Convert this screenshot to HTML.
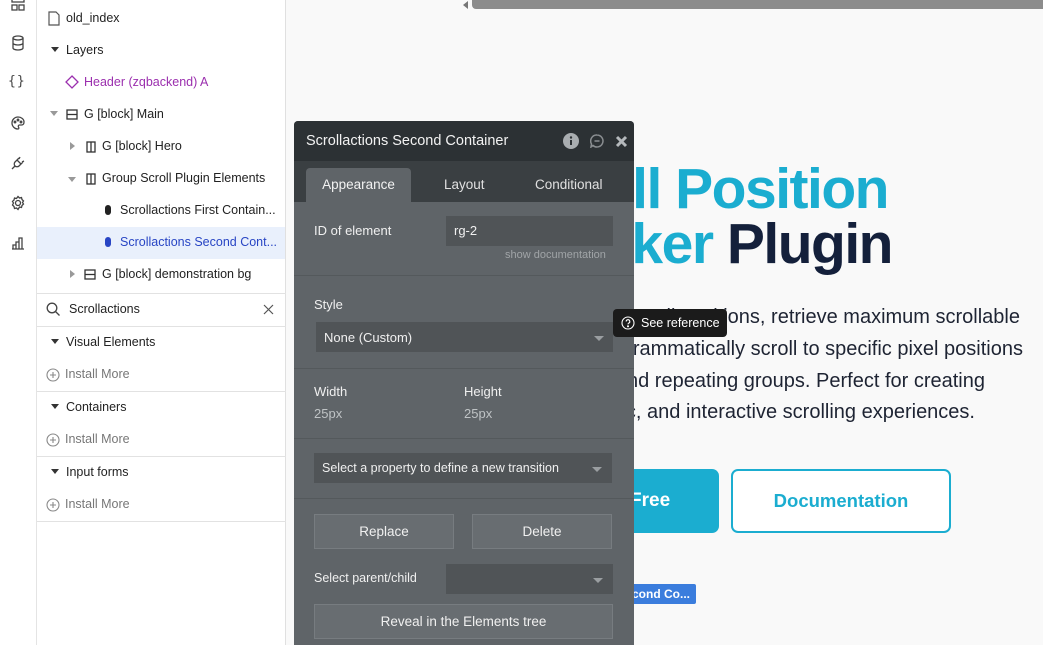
<!DOCTYPE html>
<html><head><style>
*{box-sizing:border-box;margin:0;padding:0}
body{width:1043px;height:645px;overflow:hidden;background:#f9f9f9;font-family:"Liberation Sans",sans-serif;position:relative}
.abs{position:absolute}
.sb{left:0;top:0;width:37px;height:645px;background:#fff;border-right:1px solid #e4e4e4}
.pn{left:37px;top:0;width:249px;height:645px;background:#fff;border-right:1px solid #e0e0e0}
.row{position:absolute;font-size:12.5px;color:#222;white-space:nowrap}
.tri{display:inline-block;width:0;height:0;border-left:4px solid transparent;border-right:4px solid transparent;border-top:5px solid #333}
.trir{display:inline-block;width:0;height:0;border-top:4px solid transparent;border-bottom:4px solid transparent;border-left:5px solid #999}
.hr{position:absolute;left:37px;width:249px;height:1px;background:#e2e2e2}
.ic{position:absolute;left:9px;width:18px;height:18px}
.panel{left:294px;top:121px;width:340px;height:524px;background:#5f6468;border-radius:4px 4px 0 0;overflow:hidden}
.lbl{position:absolute;color:#f0f0f0;font-size:13px}
.inp{position:absolute;background:#505457}
.btn{position:absolute;background:#686d71;border:1px solid #777c80;color:#f0f0f0;font-size:13.5px;text-align:center}
.dd{position:absolute;width:0;height:0;border-left:5px solid transparent;border-right:5px solid transparent;border-top:5px solid #9a9ea1}
.sep{position:absolute;left:0;width:340px;height:1px;background:#54595c}
.para{position:absolute;font-size:20px;color:#1e2433;white-space:nowrap;font-family:"Liberation Sans",sans-serif}
.h{position:absolute;font-size:57px;font-weight:bold;color:#1badd0;white-space:nowrap;letter-spacing:-1.5px}
</style></head><body>
<div class="abs" style="left:472px;top:0;width:571px;height:9px;background:#8c8c8c;border-radius:0 0 0 4px"></div>
<div class="abs" style="left:463px;top:1px;width:0;height:0;border-top:4px solid transparent;border-bottom:4px solid transparent;border-right:5px solid #777"></div>

<div class="h" style="right:155px;top:156px">Scroll Position</div>
<div class="h" style="right:151px;top:211px">Tracker <span style="color:#14203b">Plugin</span></div>
<div class="para" style="right:23px;top:306px">scroll positions, retrieve maximum scrollable</div>
<div class="para" style="right:20px;top:338px">and programmatically scroll to specific pixel positions</div>
<div class="para" style="right:58px;top:370px">pages and repeating groups. Perfect for creating</div>
<div class="para" style="right:68px;top:401px">dynamic, and interactive scrolling experiences.</div>
<div class="abs" style="left:600px;top:469px;width:119px;height:64px;background:#1badd0;border-radius:7px;color:#fff;font-weight:bold;font-size:19px;line-height:64px;padding-left:30px">Free</div>
<div class="abs" style="left:731px;top:469px;width:220px;height:64px;background:#fff;border:2px solid #1badd0;border-radius:7px;color:#1badd0;font-weight:bold;font-size:18.5px;line-height:60px;text-align:center">Documentation</div>
<div class="abs" style="left:620px;top:584px;width:76px;height:20px;background:#3b7ddd;border-radius:2px;color:#fff;font-size:12px;line-height:20px;padding-left:12px;font-weight:bold">cond Co...</div>

<div class="abs sb"></div>
<svg class="ic" style="top:-4px" viewBox="0 0 18 18" fill="none" stroke="#444" stroke-width="1.3"><rect x="3" y="2" width="12" height="4"/><rect x="3" y="9" width="5" height="5"/><rect x="10" y="9" width="5" height="5"/></svg>
<svg class="ic" style="top:34px" viewBox="0 0 18 18" fill="none" stroke="#444" stroke-width="1.3"><ellipse cx="9" cy="4" rx="5" ry="2"/><path d="M4 4v10c0 1 2 2 5 2s5-1 5-2V4M4 9c0 1 2 2 5 2s5-1 5-2"/></svg>
<div class="abs" style="left:8px;top:74px;font-size:13px;color:#444;font-family:'DejaVu Sans Mono',monospace;letter-spacing:1px">{}</div>
<svg class="ic" style="top:114px" viewBox="0 0 18 18" fill="none" stroke="#444" stroke-width="1.3"><path d="M9 3a6 6 0 1 0 0 12c1 0 1-1 .5-2s0-2 1-2h2c1.5 0 2.5-1 2.5-3 0-3-3-5-6-5z"/><circle cx="6" cy="8" r=".8"/><circle cx="9" cy="6" r=".8"/><circle cx="12" cy="8" r=".8"/></svg>
<svg class="ic" style="top:154px" viewBox="0 0 18 18" fill="none" stroke="#444" stroke-width="1.3"><path d="M3 15l3-3M8 6l4 4-2 2c-1 1-3 1-4 0s-1-3 0-4zM10 4l-2 2M14 8l-2 2M11 3l-1 2M15 7l-2 1"/></svg>
<svg class="ic" style="top:194px" viewBox="0 0 18 18" fill="none" stroke="#444" stroke-width="1.3"><circle cx="9" cy="9" r="2.5"/><path d="M9 2.5l1.5 1.5 2-.5.5 2 1.5 1.5-1 1.5 1 1.5-1.5 1.5-.5 2-2-.5L9 15.5 7.5 14l-2 .5-.5-2L3.5 11l1-2-1-1.5L5 6l.5-2 2 .5z"/></svg>
<svg class="ic" style="top:234px" viewBox="0 0 18 18" fill="none" stroke="#444" stroke-width="1.3"><path d="M3 15h12M4 15v-4h3v4M7 15V8h3v7M10 15V4h3v11"/></svg>

<div class="abs pn"></div>
<svg class="abs" style="left:48px;top:11px" width="12" height="15" viewBox="0 0 12 15" fill="none" stroke="#555" stroke-width="1.2"><path d="M1 1h7l3 3v10H1z"/></svg>
<div class="row" style="left:66px;top:11px">old_index</div>
<div class="row" style="left:51px;top:43px"><span class="tri" style="margin-right:7px;vertical-align:2px"></span>Layers</div>
<svg class="abs" style="left:65px;top:75px" width="14" height="14" viewBox="0 0 14 14" fill="none" stroke="#9b2fae" stroke-width="1.3"><path d="M7 1l6 6-6 6-6-6z"/></svg>
<div class="row" style="left:84px;top:75px;color:#9b2fae">Header (zqbackend) A</div>
<div class="row" style="left:50px;top:107px"><span class="tri" style="border-top-color:#999;margin-right:7px;vertical-align:2px"></span></div>
<svg class="abs" style="left:66px;top:109px" width="12" height="11" viewBox="0 0 12 11" fill="none" stroke="#333" stroke-width="1.3"><rect x="1" y="1" width="10" height="9"/><path d="M1 5.5h10"/></svg>
<div class="row" style="left:84px;top:107px">G [block] Main</div>
<div class="row" style="left:70px;top:139px"><span class="trir"></span></div>
<svg class="abs" style="left:86px;top:141px" width="10" height="12" viewBox="0 0 10 12" fill="none" stroke="#333" stroke-width="1.3"><rect x="1" y="1" width="8" height="10"/><path d="M5 1v10"/></svg>
<div class="row" style="left:102px;top:139px">G [block] Hero</div>
<div class="row" style="left:68px;top:171px"><span class="tri" style="border-top-color:#999"></span></div>
<svg class="abs" style="left:86px;top:173px" width="10" height="12" viewBox="0 0 10 12" fill="none" stroke="#333" stroke-width="1.3"><rect x="1" y="1" width="8" height="10"/><path d="M5 1v10"/></svg>
<div class="row" style="left:102px;top:171px">Group Scroll Plugin Elements</div>
<div class="abs" style="left:105px;top:205px;width:6px;height:10px;border-radius:3px;background:#222"></div>
<div class="row" style="left:120px;top:203px">Scrollactions First Contain...</div>
<div class="abs" style="left:37px;top:227px;width:248px;height:32px;background:#e9f0fc"></div>
<div class="abs" style="left:105px;top:237px;width:6px;height:10px;border-radius:3px;background:#2845c4"></div>
<div class="row" style="left:120px;top:235px;color:#2845c4">Scrollactions Second Cont...</div>
<div class="row" style="left:70px;top:267px"><span class="trir"></span></div>
<svg class="abs" style="left:84px;top:269px" width="12" height="11" viewBox="0 0 12 11" fill="none" stroke="#333" stroke-width="1.3"><rect x="1" y="1" width="10" height="9"/><path d="M1 5.5h10"/></svg>
<div class="row" style="left:102px;top:267px">G [block] demonstration bg</div>
<div class="hr" style="top:293px"></div>
<svg class="abs" style="left:46px;top:302px" width="15" height="15" viewBox="0 0 15 15" fill="none" stroke="#444" stroke-width="1.3"><circle cx="6" cy="6" r="4.8"/><path d="M9.5 9.5l4 4"/></svg>
<div class="row" style="left:69px;top:302px">Scrollactions</div>
<svg class="abs" style="left:263px;top:304px" width="11" height="11" viewBox="0 0 11 11" stroke="#555" stroke-width="1.2"><path d="M1 1l9 9M10 1l-9 9"/></svg>
<div class="hr" style="top:326px"></div>
<div class="row" style="left:51px;top:335px"><span class="tri" style="margin-right:7px;vertical-align:2px"></span>Visual Elements</div>
<svg class="abs" style="left:46px;top:368px" width="14" height="14" viewBox="0 0 14 14" fill="none" stroke="#888" stroke-width="1.1"><circle cx="7" cy="7" r="6"/><path d="M7 4v6M4 7h6"/></svg>
<div class="row" style="left:65px;top:367px;color:#777">Install More</div>
<div class="hr" style="top:391px"></div>
<div class="row" style="left:51px;top:400px"><span class="tri" style="margin-right:7px;vertical-align:2px"></span>Containers</div>
<svg class="abs" style="left:46px;top:433px" width="14" height="14" viewBox="0 0 14 14" fill="none" stroke="#888" stroke-width="1.1"><circle cx="7" cy="7" r="6"/><path d="M7 4v6M4 7h6"/></svg>
<div class="row" style="left:65px;top:432px;color:#777">Install More</div>
<div class="hr" style="top:456px"></div>
<div class="row" style="left:51px;top:465px"><span class="tri" style="margin-right:7px;vertical-align:2px"></span>Input forms</div>
<svg class="abs" style="left:46px;top:498px" width="14" height="14" viewBox="0 0 14 14" fill="none" stroke="#888" stroke-width="1.1"><circle cx="7" cy="7" r="6"/><path d="M7 4v6M4 7h6"/></svg>
<div class="row" style="left:65px;top:497px;color:#777">Install More</div>
<div class="hr" style="top:521px"></div>

<div class="abs panel">
  <div class="abs" style="left:0;top:0;width:340px;height:40px;background:#2c3134"></div>
  <div class="abs" style="left:12px;top:12px;color:#f2f2f2;font-size:14.5px">Scrollactions Second Container</div>
  <svg class="abs" style="left:269px;top:12px" width="16" height="16" viewBox="0 0 16 16"><circle cx="8" cy="8" r="8" fill="#a9adb0"/><rect x="7" y="7" width="2" height="5" fill="#2c3134"/><circle cx="8" cy="4.5" r="1.2" fill="#2c3134"/></svg>
  <svg class="abs" style="left:296px;top:13px" width="14" height="14" viewBox="0 0 14 14" fill="none" stroke="#8a8e91" stroke-width="1.5"><path d="M7 1a6 6 0 1 1-4 10.5L1 13l.5-3A6 6 0 0 1 7 1z"/><path d="M4.5 7h5"/></svg>
  <svg class="abs" style="left:321px;top:14px" width="13" height="13" viewBox="0 0 13 13" stroke="#b5b9bc" stroke-width="3"><path d="M2 2l9 9M11 2l-9 9"/></svg>
  <div class="abs" style="left:0;top:40px;width:340px;height:41px;background:#3a3f42"></div>
  <div class="abs" style="left:12px;top:47px;width:105px;height:34px;background:#5f6468;border-radius:4px 4px 0 0;color:#f2f2f2;font-size:13.5px;text-align:center;line-height:34px">Appearance</div>
  <div class="abs" style="left:150px;top:56px;color:#e0e0e0;font-size:13.5px">Layout</div>
  <div class="abs" style="left:241px;top:56px;color:#e0e0e0;font-size:13.5px">Conditional</div>
  <div class="lbl" style="left:20px;top:102px">ID of element</div>
  <div class="inp" style="left:152px;top:95px;width:167px;height:30px"></div>
  <div class="lbl" style="left:160px;top:102px">rg-2</div>
  <div class="abs" style="left:211px;top:128px;font-size:11px;color:#a0a4a7">show documentation</div>
  <div class="sep" style="top:154px"></div>
  <div class="lbl" style="left:20px;top:176px">Style</div>
  <div class="inp" style="left:22px;top:201px;width:297px;height:30px"></div>
  <div class="lbl" style="left:30px;top:209px">None (Custom)</div>
  <div class="dd" style="left:300px;top:215px"></div>
  <div class="sep" style="top:247px"></div>
  <div class="lbl" style="left:20px;top:263px">Width</div>
  <div class="lbl" style="left:170px;top:263px">Height</div>
  <div class="lbl" style="left:20px;top:285px;color:#bfc3c5">25px</div>
  <div class="lbl" style="left:170px;top:285px;color:#bfc3c5">25px</div>
  <div class="sep" style="top:317px"></div>
  <div class="inp" style="left:20px;top:332px;width:298px;height:30px"></div>
  <div class="lbl" style="left:28px;top:340px;font-size:12.5px">Select a property to define a new transition</div>
  <div class="dd" style="left:298px;top:346px"></div>
  <div class="sep" style="top:377px"></div>
  <div class="btn" style="left:20px;top:393px;width:140px;height:35px;line-height:33px">Replace</div>
  <div class="btn" style="left:178px;top:393px;width:140px;height:35px;line-height:33px">Delete</div>
  <div class="lbl" style="left:20px;top:450px;font-size:12.5px">Select parent/child</div>
  <div class="inp" style="left:152px;top:443px;width:167px;height:30px"></div>
  <div class="dd" style="left:299px;top:457px"></div>
  <div class="btn" style="left:20px;top:483px;width:299px;height:35px;line-height:33px">Reveal in the Elements tree</div>
</div>

<div class="abs" style="left:613px;top:309px;width:114px;height:28px;background:#1b1b1b;border-radius:4px;color:#fff;font-size:12.5px;line-height:28px;padding-left:28px">See reference</div>
<svg class="abs" style="left:621px;top:316px" width="14" height="14" viewBox="0 0 14 14" fill="none" stroke="#fff" stroke-width="1.1"><circle cx="7" cy="7" r="6"/><path d="M5.2 5.5a1.8 1.8 0 1 1 2.4 1.7c-.5.2-.6.6-.6 1.2"/><circle cx="7" cy="10.3" r=".5" fill="#fff"/></svg>
</body></html>
